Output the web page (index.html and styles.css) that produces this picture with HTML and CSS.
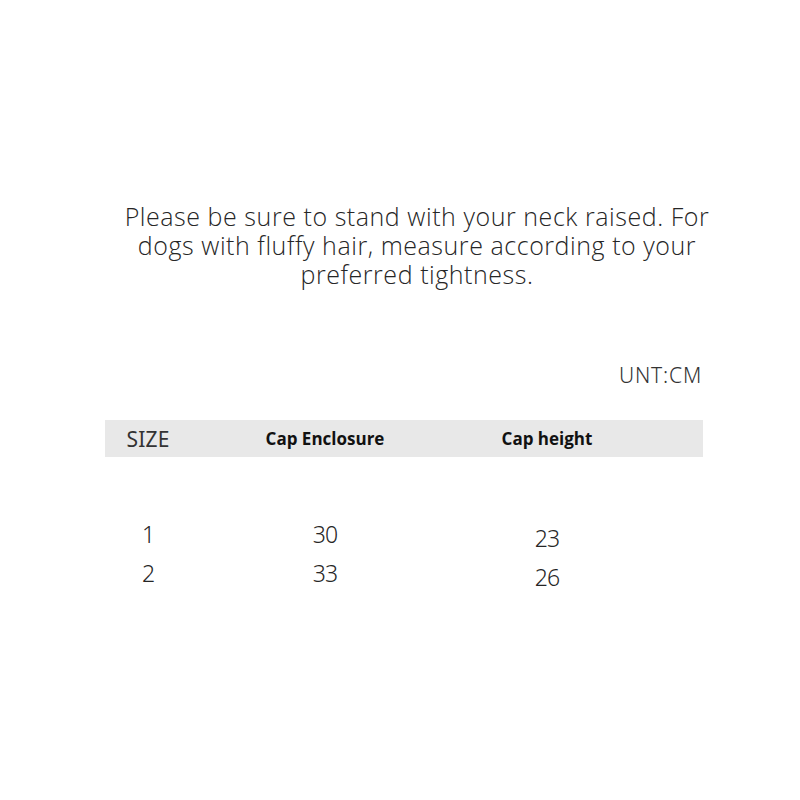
FILE: index.html
```html
<!DOCTYPE html>
<html>
<head>
<meta charset="utf-8">
<link rel="stylesheet" href="styles.css">
</head>
<body>
<div class="page">
  <p class="note">Please be sure to stand with your neck raised. For dogs with fluffy hair, measure according to your preferred tightness.</p>
  <div class="unit">UNT:CM</div>
  <div class="table">
    <div class="head">
      <div class="c1 size">SIZE</div>
      <div class="c2 th">Cap Enclosure</div>
      <div class="c3 th">Cap height</div>
    </div>
    <div class="body">
      <div class="row">
        <div class="c1">1</div>
        <div class="c2">30</div>
        <div class="c3 low">23</div>
      </div>
      <div class="row">
        <div class="c1">2</div>
        <div class="c2">33</div>
        <div class="c3 low">26</div>
      </div>
    </div>
  </div>
</div>
</body>
</html>
```
FILE: styles.css
```css
html, body {
  margin: 0;
  padding: 0;
  background: #fff;
}
.page {
  width: 800px;
  height: 800px;
  display: flex;
  flex-direction: column;
  color: #2b2b2b;
}
.note {
  margin: 202px 0 0 117px;
  width: 600px;
  text-align: center;
  font-family: "Open Sans", sans-serif;
  font-weight: 300;
  font-size: 25px;
  line-height: 29px;
  letter-spacing: 0.55px;
  color: #262626;
}
.unit {
  margin: 74px 98px 0 0;
  align-self: flex-end;
  font-family: "Noto Sans", sans-serif;
  font-weight: 300;
  font-size: 21px;
  line-height: 24px;
  letter-spacing: 0.8px;
  color: #333;
}
.table {
  margin: 33px 0 0 105px;
  width: 598px;
}
.head {
  background: #e8e8e8;
  height: 37px;
  display: grid;
  grid-template-columns: 86px 268px 176px 1fr;
  align-items: center;
}
.row {
  display: grid;
  grid-template-columns: 86px 268px 176px 1fr;
  height: 39px;
  align-items: start;
}
.body {
  padding-top: 64px;
  font-family: "Noto Sans", sans-serif;
  font-weight: 300;
  font-size: 23px;
  line-height: 26px;
  letter-spacing: -1px;
  color: #262626;
}
.c1, .c2, .c3 {
  text-align: center;
}
.size {
  font-family: "Noto Sans", sans-serif;
  font-weight: 400;
  font-size: 21px;
  letter-spacing: 0.2px;
  color: #333;
}
.th {
  font-family: "Open Sans", sans-serif;
  font-weight: 700;
  font-size: 17px;
  color: #111;
}
.low {
  padding-top: 4px;
}
```
